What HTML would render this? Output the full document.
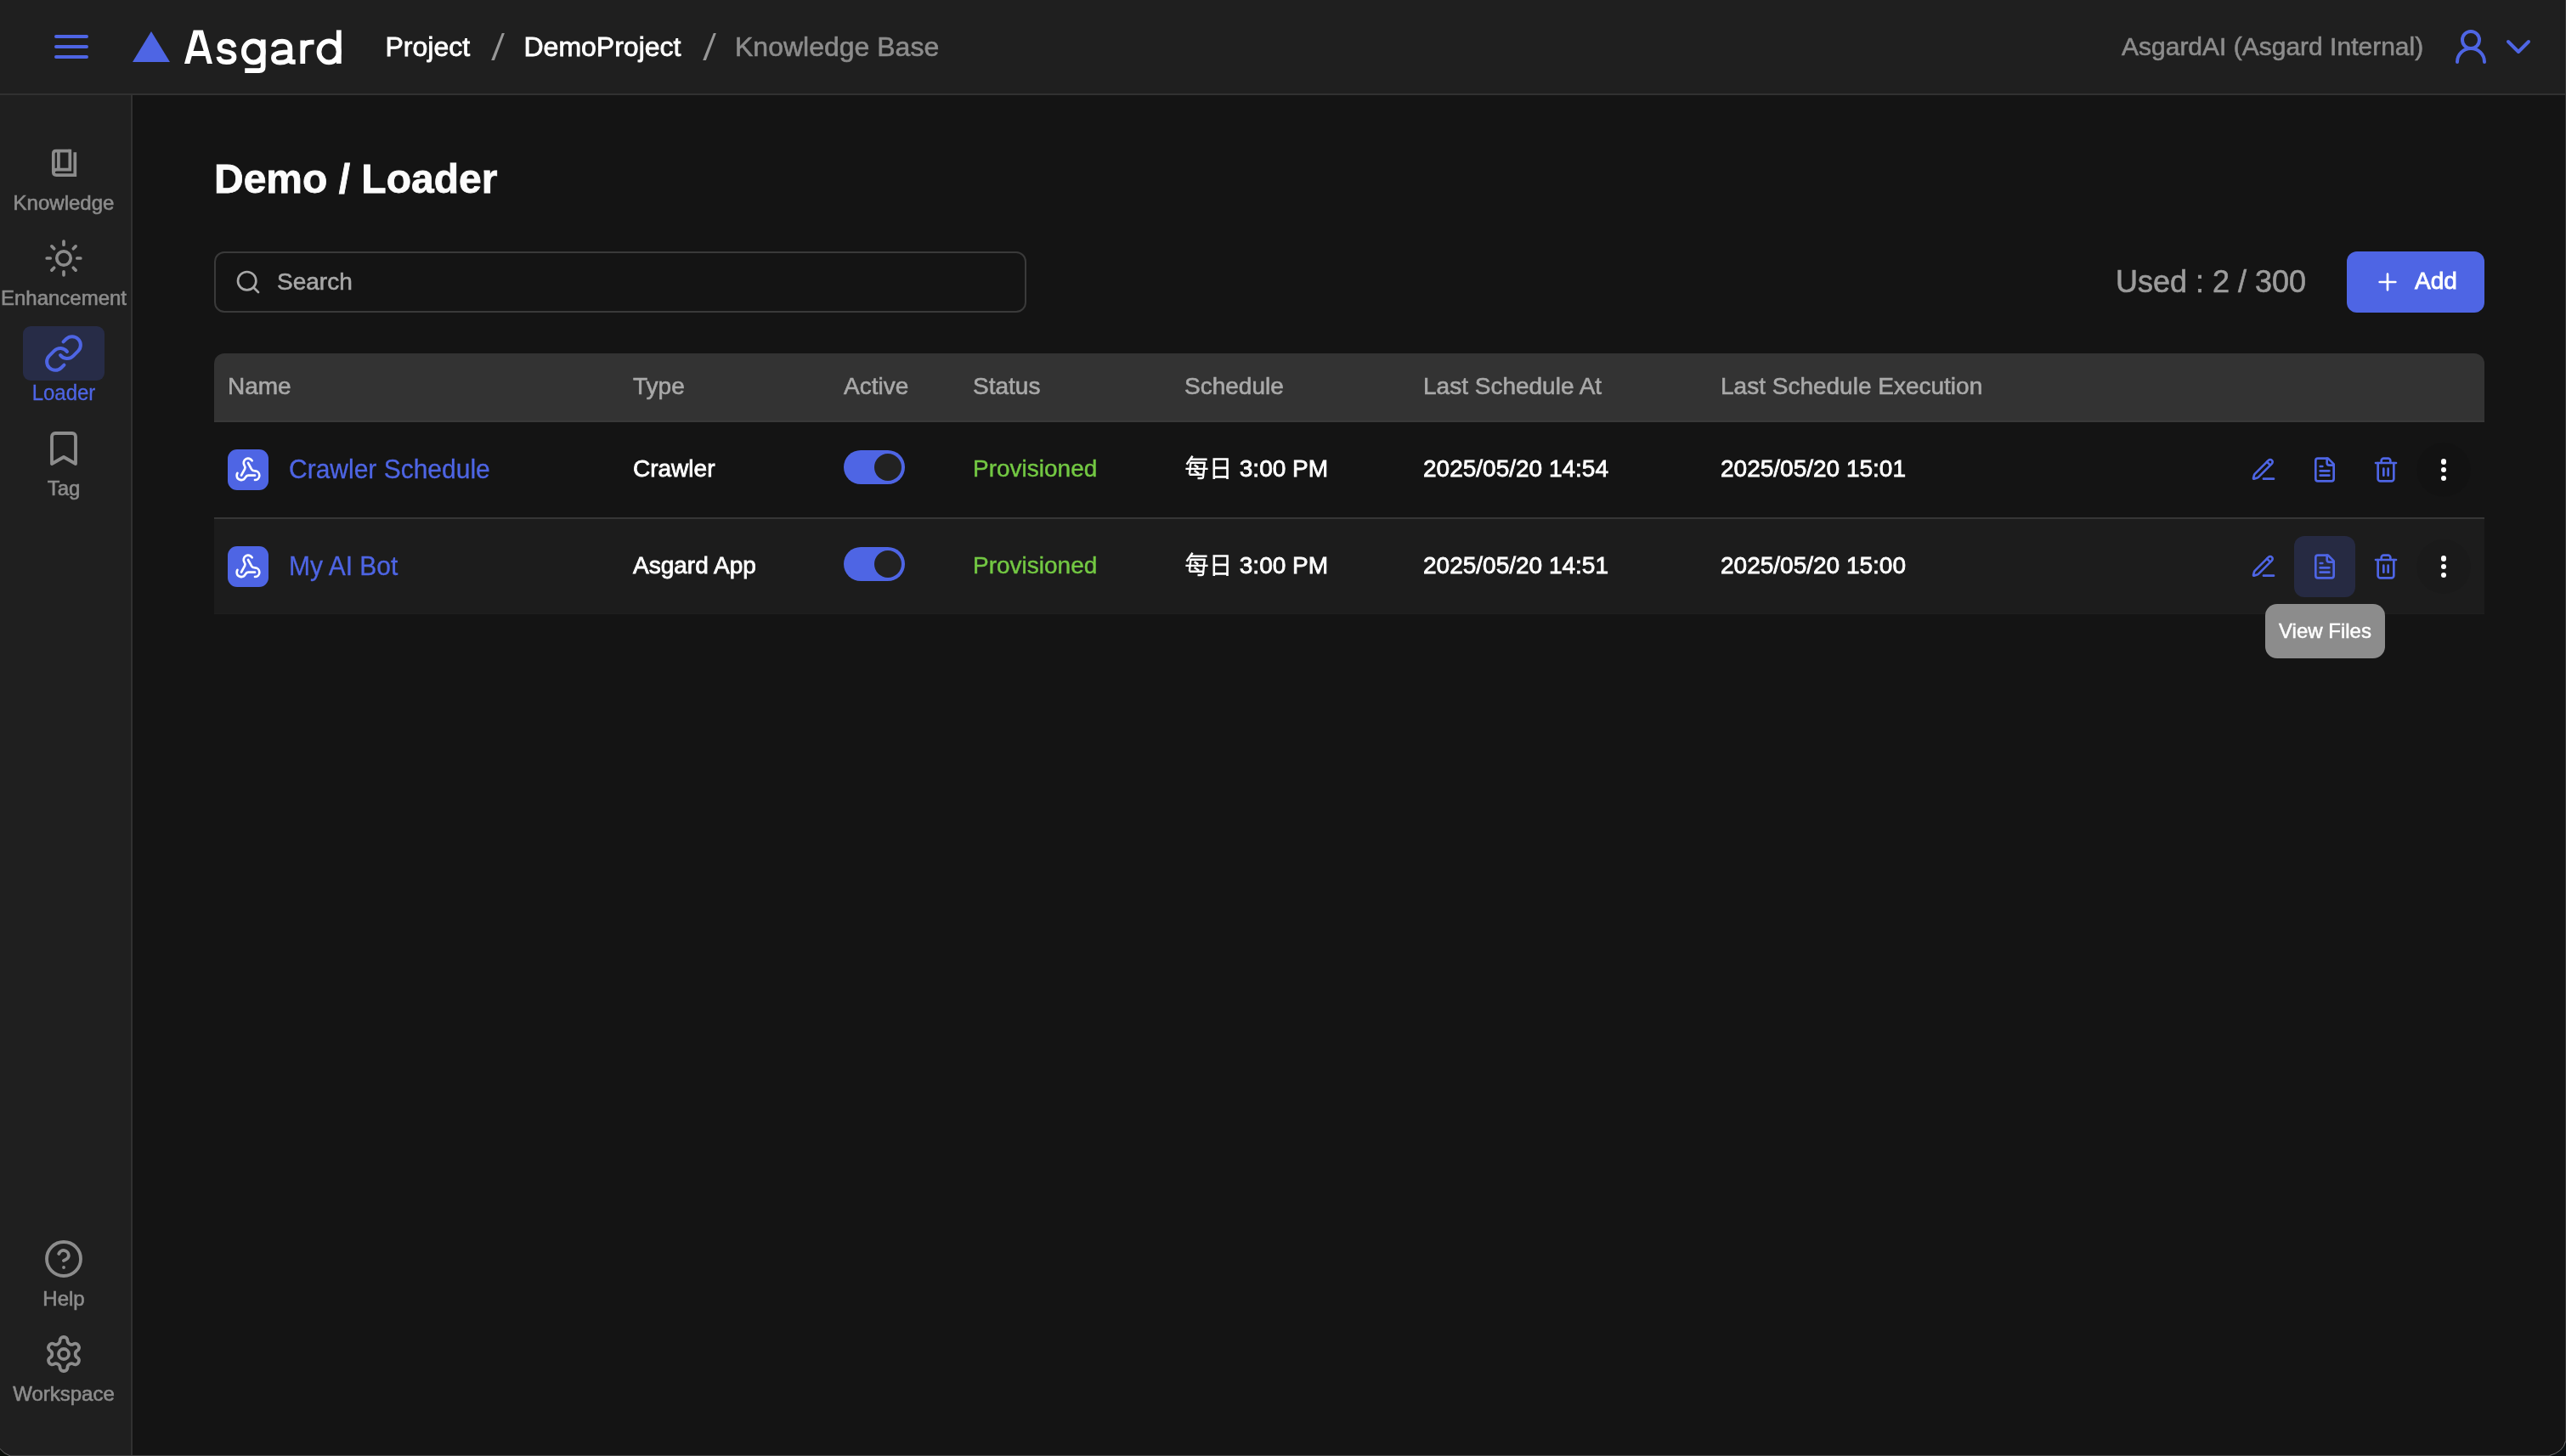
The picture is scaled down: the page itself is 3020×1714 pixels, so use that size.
<!DOCTYPE html>
<html lang="en">
<head>
<meta charset="utf-8">
<title>Asgard - Loader</title>
<style>
*{box-sizing:border-box;margin:0;padding:0}
html,body{width:3020px;height:1714px;overflow:hidden;background:#141414}
body{font-family:"Liberation Sans",sans-serif;color:#fff;position:relative;-webkit-font-smoothing:antialiased}
#all{position:absolute;left:0;top:0;width:3020px;height:1714px;will-change:transform;-webkit-text-stroke:0.8px}
.bc.g,#org,.nav .lbl,.ph,#used,.h{-webkit-text-stroke:0.6px}
.row .ok{-webkit-text-stroke:0.45px}
.row .nm,.nav.act .lbl{-webkit-text-stroke:0.3px;transform:scaleY(1.04);transform-origin:0 77%}
.abs{position:absolute}
svg{display:block;overflow:visible}
.ic{fill:none;stroke-linecap:round;stroke-linejoin:round}
/* header */
#hdr{position:absolute;left:0;top:0;width:3020px;height:112px;background:#1f1f1f;border-bottom:2px solid #313131}
#logo{position:absolute;left:218px;top:22px;font-size:58px;line-height:66px;color:#fff;letter-spacing:1px;white-space:nowrap}
.bc{position:absolute;top:35px;font-size:32px;line-height:40px;white-space:nowrap;color:#fff}
.bc.g{color:#8c8c8c}
#org{position:absolute;top:35px;left:2497px;font-size:30px;line-height:40px;color:#8c8c8c;white-space:nowrap}
/* sidebar */
#side{position:absolute;left:0;top:112px;width:156px;height:1602px;background:#1f1f1f;border-right:2px solid #313131}
.nav{position:absolute;left:0;width:154px;height:96px;text-align:center;color:#8c8c8c}
.nav .box{position:absolute;left:27px;top:0;width:96px;height:64px;border-radius:9px}
.nav .box svg{position:absolute;left:24px;top:8px}
.nav .lbl{position:absolute;left:-22px;width:194px;top:63px;font-size:24px;line-height:32px;white-space:nowrap}
.nav.act{color:#4e65e4}
.nav.act .box{background:#272c47}
/* main */
#title{position:absolute;left:252px;top:181px;font-size:48px;line-height:60px;font-weight:700;color:#fbfbfb;white-space:nowrap}
#search{position:absolute;left:252px;top:296px;width:956px;height:72px;border:2px solid #3a3a3a;border-radius:12px}
#search .ph{position:absolute;left:72px;top:16px;font-size:28px;line-height:36px;color:#a8a8a8}
#used{position:absolute;left:2490px;top:310px;font-size:36px;line-height:44px;color:#9c9c9c;white-space:nowrap}
#add{position:absolute;left:2762px;top:296px;width:162px;height:72px;border-radius:12px;background:#4e65e4}
#add .t{position:absolute;left:80px;top:17px;font-size:28px;line-height:36px;color:#fff}
/* table */
#th{position:absolute;left:252px;top:416px;width:2672px;height:81px;background:#333333;border-radius:12px 12px 0 0;border-bottom:2px solid #383838}
.h{position:absolute;top:21px;font-size:28px;line-height:36px;color:#a9a9a9;white-space:nowrap}
.row{position:absolute;left:252px;width:2672px;height:112px}
#r1{top:497px;height:114px;border-bottom:2px solid #363636}
#r2{top:611px;background:#1c1c1c;border-bottom:1px solid #1f1f1f}
.c{position:absolute;top:37.3px;font-size:28px;line-height:36px;color:#fff;white-space:nowrap}
.row .ico{position:absolute;left:16px;top:32px;width:48px;height:48px;border-radius:11px;background:#4e65e4}
.row .ico svg{position:absolute;left:8px;top:8px}
.row .nm{position:absolute;left:88px;top:36px;font-size:30px;line-height:40px;color:#4e65e4;white-space:nowrap}
.row .ok{color:#73c843}
.tg{position:absolute;left:741px;top:33px;width:72px;height:40px;border-radius:20px;background:#4e65e4}
.tg i{position:absolute;right:4px;top:4px;width:32px;height:32px;border-radius:16px;background:#222222}
.act-ic{position:absolute;top:40px}
.hov{position:absolute;left:2448px;top:20px;width:72px;height:72px;border-radius:12px;background:#262a42}
#tip{position:absolute;left:2666px;top:711px;width:141px;height:64px;border-radius:14px;background:#8c8c8c;color:#fff;font-size:24px;line-height:32px;text-align:center;padding-top:15.5px;white-space:nowrap}
#tip span{display:block;-webkit-text-stroke:0.5px}
.dots{position:absolute;left:2592px;top:24px;width:64px;height:64px;border-radius:32px;background:rgba(0,0,0,0.06)}
.dots b{position:absolute;left:28.7px;width:6.2px;height:6.2px;border-radius:4px;background:#fff}
</style>
</head>
<body>
<div id="all">
<!-- HEADER -->
<div id="hdr">
  <svg class="abs ic" style="left:60px;top:31px" width="48" height="48" viewBox="0 0 24 24" stroke="#4e65e4" stroke-width="2"><path d="M3 6h18M3 12h18M3 18h18"/></svg>
  <svg class="abs" style="left:156px;top:37px" width="44" height="36" viewBox="0 0 44 36"><path d="M22 0 L44 36 H0 Z" fill="#4e65e4"/></svg>
  <svg class="abs" style="left:205px;top:20px" width="220" height="80" viewBox="205 20 220 80" fill="none" stroke="#fff" stroke-width="5.8" stroke-linecap="butt" stroke-linejoin="round">
    <path fill="#fff" stroke="none" fill-rule="evenodd" d="M217 74.9L227.7 35.4H238.9L250 74.9H244L241.7 65.9H225.8L223.4 74.9ZM227.5 59.9H239.7L233.5 40.6Z"/>
    <path d="M275.5 55.6C274.5 51 271 48.7 266.6 48.7C262 48.7 258.6 51 258.6 55.2C258.6 59.5 262 60.2 266.7 61C272 62 275.5 63.2 275.5 67.6C275.5 71.5 271.5 73.2 266.6 73.2C261.5 73.2 258 70.8 257.3 66.7"/>
    <ellipse cx="298.3" cy="60.9" rx="11.4" ry="12.5"/>
    <path d="M309.7 46.6V78.5Q309.7 83.2 305 83.2H288.2"/>
    <path d="M322 55.2C322.5 51 326 48.7 331.9 48.7C337.5 48.7 341.3 51.5 341.3 57.5V70Q341.3 72.9 344.5 72.9H347.7"/>
    <path d="M341.3 61.4C337 61.4 332 61.7 328.5 62.4C324.5 63.2 322 64.9 322 67.9C322 71.6 325 73.7 329.5 73.7C335.5 73.7 341.3 71.3 341.3 66"/>
    <path d="M356.3 74.9V47.4M356.3 59C356.3 53 360 49.6 366 49.6H369.6"/>
    <ellipse cx="387.1" cy="60.9" rx="11.6" ry="12.5"/>
    <path d="M398.8 35.4V74.9"/>
  </svg>
  <div class="bc" style="left:453.5px">Project</div>
  <svg class="abs" style="left:570px;top:30px" width="30" height="50" viewBox="570 30 30 50"><path fill="#979797" d="M578.2 71H581.9L593.9 39H590.8Z"/></svg>
  <div class="bc" style="left:616.5px">DemoProject</div>
  <svg class="abs" style="left:819px;top:30px" width="30" height="50" viewBox="570 30 30 50"><path fill="#979797" d="M578.2 71H581.9L593.9 39H590.8Z"/></svg>
  <div class="bc g" style="left:865px">Knowledge Base</div>
  <div id="org">AsgardAI (Asgard Internal)</div>
  <svg class="abs ic" style="left:2884px;top:31px" width="48" height="48" viewBox="0 0 24 24" stroke="#4e65e4" stroke-width="2"><circle cx="12" cy="8" r="5"/><path d="M20 21a8 8 0 0 0-16 0"/></svg>
  <svg class="abs ic" style="left:2940px;top:31px" width="48" height="48" viewBox="0 0 24 24" stroke="#4e65e4" stroke-width="2"><path d="m6 9 6 6 6-6"/></svg>
</div>

<!-- SIDEBAR -->
<div id="side">
  <div class="nav" style="top:48px">
    <div class="box"><svg class="ic" width="48" height="48" viewBox="0 0 48 48" stroke="#8c8c8c" stroke-width="3.7" style="stroke-linecap:butt;stroke-linejoin:miter"><path d="M31.3 9.7H14.8Q11.8 9.7 11.8 12.8V34.6Q11.8 38.1 15.2 38.1H37.3V11.2"/><path d="M31.3 7.85V31.6H15.5Q12 31.6 11.8 35"/><path d="M17.9 9.7V31.6"/></svg></div>
    <div class="lbl">Knowledge</div>
  </div>
  <div class="nav" style="top:160px">
    <div class="box"><svg class="ic" width="48" height="48" viewBox="0 0 24 24" stroke="#8c8c8c" stroke-width="1.85"><circle cx="12" cy="12" r="4.1"/><path d="M12 2.1v2M12 19.9v2M4.95 4.95l1.4 1.4M17.65 17.65l1.4 1.4M2.1 12h2M19.9 12h2M6.35 17.65l-1.4 1.4M19.05 4.95l-1.4 1.4"/></svg></div>
    <div class="lbl">Enhancement</div>
  </div>
  <div class="nav act" style="top:272px">
    <div class="box"><svg class="ic" width="48" height="48" viewBox="0 0 24 24" stroke="#4e65e4" stroke-width="2"><path d="M10 13a5 5 0 0 0 7.54.54l3-3a5 5 0 0 0-7.07-7.07l-1.72 1.71"/><path d="M14 11a5 5 0 0 0-7.54-.54l-3 3a5 5 0 0 0 7.07 7.07l1.71-1.71"/></svg></div>
    <div class="lbl">Loader</div>
  </div>
  <div class="nav" style="top:384px">
    <div class="box"><svg class="ic" width="48" height="48" viewBox="0 0 24 24" stroke="#8c8c8c" stroke-width="1.9"><path d="m19 21-7-4-7 4V5a2 2 0 0 1 2-2h10a2 2 0 0 1 2 2v16z"/></svg></div>
    <div class="lbl">Tag</div>
  </div>
  <div class="nav" style="top:1338px">
    <div class="box"><svg class="ic" width="48" height="48" viewBox="0 0 24 24" stroke="#8c8c8c" stroke-width="1.9"><circle cx="12" cy="12" r="10"/><path d="M9.09 9a3 3 0 0 1 5.83 1c0 2-3 3-3 3"/><path d="M12 17h.01"/></svg></div>
    <div class="lbl">Help</div>
  </div>
  <div class="nav" style="top:1450px">
    <div class="box"><svg class="ic" width="48" height="48" viewBox="0 0 24 24" stroke="#8c8c8c" stroke-width="1.9"><path d="M12.22 2h-.44a2 2 0 0 0-2 2v.18a2 2 0 0 1-1 1.73l-.43.25a2 2 0 0 1-2 0l-.15-.08a2 2 0 0 0-2.73.73l-.22.38a2 2 0 0 0 .73 2.73l.15.1a2 2 0 0 1 1 1.72v.51a2 2 0 0 1-1 1.74l-.15.09a2 2 0 0 0-.73 2.73l.22.38a2 2 0 0 0 2.73.73l.15-.08a2 2 0 0 1 2 0l.43.25a2 2 0 0 1 1 1.73V20a2 2 0 0 0 2 2h.44a2 2 0 0 0 2-2v-.18a2 2 0 0 1 1-1.73l.43-.25a2 2 0 0 1 2 0l.15.08a2 2 0 0 0 2.73-.73l.22-.39a2 2 0 0 0-.73-2.73l-.15-.08a2 2 0 0 1-1-1.74v-.5a2 2 0 0 1 1-1.74l.15-.09a2 2 0 0 0 .73-2.73l-.22-.38a2 2 0 0 0-2.73-.73l-.15.08a2 2 0 0 1-2 0l-.43-.25a2 2 0 0 1-1-1.73V4a2 2 0 0 0-2-2z"/><circle cx="12" cy="12" r="3"/></svg></div>
    <div class="lbl">Workspace</div>
  </div>
</div>

<!-- MAIN -->
<div id="title">Demo / Loader</div>
<div id="search">
  <svg class="abs ic" style="left:22px;top:18px" width="32" height="32" viewBox="0 0 24 24" stroke="#a8a8a8" stroke-width="2"><circle cx="11" cy="11" r="8"/><path d="m21 21-4.3-4.3"/></svg>
  <div class="ph">Search</div>
</div>
<div id="used">Used : 2 / 300</div>
<div id="add">
  <svg class="abs ic" style="left:32px;top:20px" width="32" height="32" viewBox="0 0 24 24" stroke="#fff" stroke-width="2"><path d="M5 12h14M12 5v14"/></svg>
  <div class="t">Add</div>
</div>

<div id="th">
  <div class="h" style="left:16px">Name</div>
  <div class="h" style="left:493px">Type</div>
  <div class="h" style="left:741px">Active</div>
  <div class="h" style="left:893px">Status</div>
  <div class="h" style="left:1142px">Schedule</div>
  <div class="h" style="left:1423px">Last Schedule At</div>
  <div class="h" style="left:1773px">Last Schedule Execution</div>
</div>

<div class="row" id="r1">
  <div class="ico"><svg class="ic" width="32" height="32" viewBox="0 0 24 24" stroke="#fff" stroke-width="2"><path d="M18 16.98h-5.99c-1.1 0-1.95.94-2.48 1.9A4 4 0 0 1 2 17c.01-.7.2-1.4.57-2"/><path d="m6 17 3.13-5.78c.53-.97.1-2.18-.5-3.1a4 4 0 1 1 6.89-4.06"/><path d="m12 6 3.13 5.73C15.66 12.7 16.9 13 18 13a4 4 0 0 1 0 8"/></svg></div>
  <div class="nm">Crawler Schedule</div>
  <div class="c" style="left:493px">Crawler</div>
  <div class="tg"><i></i></div>
  <div class="c ok" style="left:893px">Provisioned</div>
  <div class="c" style="left:1143px"><svg class="ic" style="display:inline-block;vertical-align:-6px;stroke-linecap:butt;stroke-linejoin:miter" width="56" height="32" viewBox="0 -26 56 32" stroke="#fff" stroke-width="2.4"><path d="M8.6 -24.2L1.6 -14.2M5.4 -20.2H25.6M6.6 -16.3H22.9M6.5 -17.3L4.9 -2.3M0.4 -9.1H26.6M4.8 -2.3H21.9M22.8 -17.3L21 0.4Q20.8 2 19 2H14.5M10.6 -13.6L15.3 -10.9M10.6 -7L16.1 -3.5"/><path d="M33.8 -21.8V3.1M49.5 -21.8V3.1M33.8 -20.5H49.5M33.8 -10.1H49.5M33.8 0.4H49.5" stroke-width="2.6"/></svg> 3:00 PM</div>
  <div class="c" style="left:1423px">2025/05/20 14:54</div>
  <div class="c" style="left:1773px">2025/05/20 15:01</div>
  <svg class="act-ic ic" style="left:2396px" width="32" height="32" viewBox="0 0 24 24" stroke="#4e65e4" stroke-width="2"><path d="M12 20h9"/><path d="m15 5 3 3"/><path d="M16.376 3.622a1 1 0 0 1 3.002 3.002L7.368 18.635a2 2 0 0 1-.855.506l-2.872.838a.5.5 0 0 1-.62-.62l.838-2.872a2 2 0 0 1 .506-.854z"/></svg>
  <svg class="act-ic ic" style="left:2468px" width="32" height="32" viewBox="0 0 24 24" stroke="#4e65e4" stroke-width="2"><path d="M15 2H6a2 2 0 0 0-2 2v16a2 2 0 0 0 2 2h12a2 2 0 0 0 2-2V7Z"/><path d="M14 2v4a2 2 0 0 0 2 2h4"/><path d="M10 9H8"/><path d="M16 13H8"/><path d="M16 17H8"/></svg>
  <svg class="act-ic ic" style="left:2540px" width="32" height="32" viewBox="0 0 24 24" stroke="#4e65e4" stroke-width="2"><path d="M3 6h18"/><path d="M19 6v14c0 1-1 2-2 2H7c-1 0-2-1-2-2V6"/><path d="M8 6V4c0-1 1-2 2-2h4c1 0 2 1 2 2v2"/><path d="M10 11v6M14 11v6"/></svg>
  <div class="dots"><b style="top:19.4px"></b><b style="top:29px"></b><b style="top:38.6px"></b></div>
</div>

<div class="row" id="r2">
  <div class="ico"><svg class="ic" width="32" height="32" viewBox="0 0 24 24" stroke="#fff" stroke-width="2"><path d="M18 16.98h-5.99c-1.1 0-1.95.94-2.48 1.9A4 4 0 0 1 2 17c.01-.7.2-1.4.57-2"/><path d="m6 17 3.13-5.78c.53-.97.1-2.18-.5-3.1a4 4 0 1 1 6.89-4.06"/><path d="m12 6 3.13 5.73C15.66 12.7 16.9 13 18 13a4 4 0 0 1 0 8"/></svg></div>
  <div class="nm">My AI Bot</div>
  <div class="c" style="left:493px">Asgard App</div>
  <div class="tg"><i></i></div>
  <div class="c ok" style="left:893px">Provisioned</div>
  <div class="c" style="left:1143px"><svg class="ic" style="display:inline-block;vertical-align:-6px;stroke-linecap:butt;stroke-linejoin:miter" width="56" height="32" viewBox="0 -26 56 32" stroke="#fff" stroke-width="2.4"><path d="M8.6 -24.2L1.6 -14.2M5.4 -20.2H25.6M6.6 -16.3H22.9M6.5 -17.3L4.9 -2.3M0.4 -9.1H26.6M4.8 -2.3H21.9M22.8 -17.3L21 0.4Q20.8 2 19 2H14.5M10.6 -13.6L15.3 -10.9M10.6 -7L16.1 -3.5"/><path d="M33.8 -21.8V3.1M49.5 -21.8V3.1M33.8 -20.5H49.5M33.8 -10.1H49.5M33.8 0.4H49.5" stroke-width="2.6"/></svg> 3:00 PM</div>
  <div class="c" style="left:1423px">2025/05/20 14:51</div>
  <div class="c" style="left:1773px">2025/05/20 15:00</div>
  <div class="hov"></div>
  <svg class="act-ic ic" style="left:2396px" width="32" height="32" viewBox="0 0 24 24" stroke="#4e65e4" stroke-width="2"><path d="M12 20h9"/><path d="m15 5 3 3"/><path d="M16.376 3.622a1 1 0 0 1 3.002 3.002L7.368 18.635a2 2 0 0 1-.855.506l-2.872.838a.5.5 0 0 1-.62-.62l.838-2.872a2 2 0 0 1 .506-.854z"/></svg>
  <svg class="act-ic ic" style="left:2468px" width="32" height="32" viewBox="0 0 24 24" stroke="#4e65e4" stroke-width="2"><path d="M15 2H6a2 2 0 0 0-2 2v16a2 2 0 0 0 2 2h12a2 2 0 0 0 2-2V7Z"/><path d="M14 2v4a2 2 0 0 0 2 2h4"/><path d="M10 9H8"/><path d="M16 13H8"/><path d="M16 17H8"/></svg>
  <svg class="act-ic ic" style="left:2540px" width="32" height="32" viewBox="0 0 24 24" stroke="#4e65e4" stroke-width="2"><path d="M3 6h18"/><path d="M19 6v14c0 1-1 2-2 2H7c-1 0-2-1-2-2V6"/><path d="M8 6V4c0-1 1-2 2-2h4c1 0 2 1 2 2v2"/><path d="M10 11v6M14 11v6"/></svg>
  <div class="dots"><b style="top:19.4px"></b><b style="top:29px"></b><b style="top:38.6px"></b></div>
</div>

<div id="tip"><span>View Files</span></div>
<div class="abs" style="left:3019px;top:0;width:1px;height:1714px;background:#383838"></div>
<div class="abs" style="left:0;top:1713px;width:3020px;height:1px;background:#444444"></div>
<svg class="abs" style="left:0;top:1694px" width="24" height="20" viewBox="0 1694 24 20"><path d="M0 1705.5Q4 1711 12 1714H0Z" fill="#0b100b"/><path d="M0 1705.5Q4 1711 12 1714" fill="none" stroke="#6a6a6a" stroke-width="1"/></svg>
<svg class="abs" style="left:2996px;top:1690px" width="24" height="24" viewBox="2996 1690 24 24"><path d="M3020 1696.5Q3017 1709 3000.5 1714H3020Z" fill="#0b1012"/><path d="M3019.5 1696.5Q3017 1709 3000.5 1713.5" fill="none" stroke="#6a6a6a" stroke-width="1"/></svg>
</div>
</body>
</html>
